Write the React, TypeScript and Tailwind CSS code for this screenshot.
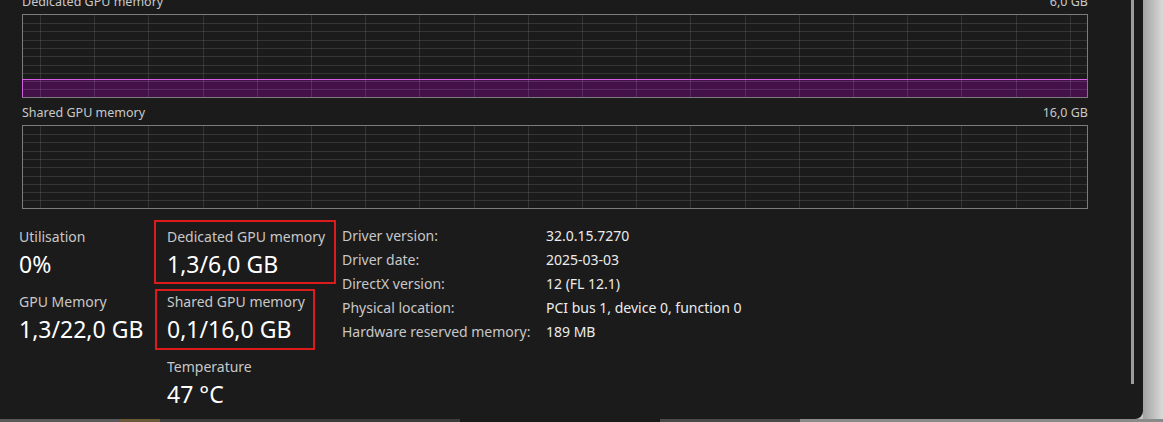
const font = { fontFamily: '"Noto Sans", "Open Sans", sans-serif' };

const Graph = ({ fill }: { fill: number }) => {
  const w = 1066;
  const h = 84;
  const rows = Array.from({ length: 9 }, (_, i) => 9 + i * 8.3);
  const cols = Array.from({ length: 20 }, (_, i) => 18 + i * 54.2).filter((x) => x < w - 2);
  const top = h - 1 - fill;

  return (
    <svg width={w} height={h} className="block">
      {fill > 0 && <rect x={1} y={top} width={w - 2} height={fill} fill="#441248" />}
      {rows.map((y) => (
        <line key={y} x1={1} x2={w - 1} y1={Math.round(y) + 0.5} y2={Math.round(y) + 0.5} stroke="#ffffff" strokeOpacity={0.11} />
      ))}
      {cols.map((x) => (
        <line key={x} x1={Math.round(x) + 0.5} x2={Math.round(x) + 0.5} y1={1} y2={h - 1} stroke="#ffffff" strokeOpacity={0.11} />
      ))}
      <rect x={0.5} y={0.5} width={w - 1} height={h - 1} fill="none" stroke="#7c7c7c" />
      {fill > 0 && (
        <>
          <line x1={1} x2={w - 1} y1={top + 0.5} y2={top + 0.5} stroke="#d85ce8" strokeWidth={1.2} />
          <line x1={0.5} x2={0.5} y1={top} y2={h - 1} stroke="#d85ce8" />
        </>
      )}
    </svg>
  );
};

const GraphBlock = ({ title, max, fill, first }: { title: string; max: string; fill: number; first?: boolean }) => (
  <div className={first ? '-mt-[6px]' : 'mt-[7px]'}>
    <div className="flex justify-between h-[16px] leading-[16px] text-[12.5px] text-[#c9c9c9] mb-[4px]">
      <span>{title}</span>
      <span>{max}</span>
    </div>
    <Graph fill={fill} />
  </div>
);

const Stat = ({ label, value }: { label: string; value: string }) => (
  <div>
    <div className="h-[20px] leading-[20px] text-[14px] text-[#c8c8c8] whitespace-nowrap">{label}</div>
    <div className="h-[30px] leading-[30px] text-[23px] text-white mt-[2px] whitespace-nowrap">{value}</div>
  </div>
);

const details = [
  ['Driver version:', '32.0.15.7270'],
  ['Driver date:', '2025-03-03'],
  ['DirectX version:', '12 (FL 12.1)'],
  ['Physical location:', 'PCI bus 1, device 0, function 0'],
  ['Hardware reserved memory:', '189 MB'],
];

export default function App() {
  return (
    <div className="w-[1163px] h-[422px] overflow-hidden bg-[#c4c4c4]" style={font}>
      <div className="flex h-[419px]">
        <div className="w-[1143px] h-full bg-[#1b1b1b] rounded-br-[8px] flex overflow-hidden">
          <div className="w-[1131px] pl-[22px]">
            <div className="w-[1066px]">
              <GraphBlock title="Dedicated GPU memory" max="6,0 GB" fill={18} first />
              <GraphBlock title="Shared GPU memory" max="16,0 GB" fill={0} />
            </div>

            <div className="flex items-start mt-[15px] -ml-[3px]">
              <div className="w-[148px] pt-[3px] flex flex-col gap-[13px]">
                <Stat label="Utilisation" value="0%" />
                <Stat label="GPU Memory" value="1,3/22,0 GB" />
              </div>

              <div className="w-[175px] pt-[3px] flex flex-col gap-[13px]">
                <div className="relative">
                  <Stat label="Dedicated GPU memory" value="1,3/6,0 GB" />
                  <div className="absolute -top-[7px] -left-[13px] w-[182px] h-[64px] border-2 border-[#dc1c1c]" />
                </div>
                <div className="relative">
                  <Stat label="Shared GPU memory" value="0,1/16,0 GB" />
                  <div className="absolute -top-[3px] -left-[12px] w-[160px] h-[61px] border-2 border-[#dc1c1c]" />
                </div>
                <Stat label="Temperature" value="47 °C" />
              </div>

              <div className="text-[14px] leading-[24px]">
                {details.map(([k, v]) => (
                  <div key={k} className="flex">
                    <span className="w-[204px] text-[#c8c8c8]">{k}</span>
                    <span className="text-[#ececec]">{v}</span>
                  </div>
                ))}
              </div>
            </div>
          </div>
          <div className="w-[3px] h-[384px] bg-[#9c9c9c]" />
        </div>
        <div className="flex-1 bg-gradient-to-r from-[#a2a2a2] to-[#dadada]" />
      </div>
      <div className="h-[3px] flex">
        <div className="w-[120px] bg-[#5a5a5a]" />
        <div className="w-[40px] bg-[#6b5a3a]" />
        <div className="w-[300px] bg-[#3c3c3c]" />
        <div className="w-[200px] bg-[#1a1a1a]" />
        <div className="w-[140px] bg-[#4a4a4a]" />
        <div className="flex-1 bg-[#8a8a8a]" />
      </div>
    </div>
  );
}
